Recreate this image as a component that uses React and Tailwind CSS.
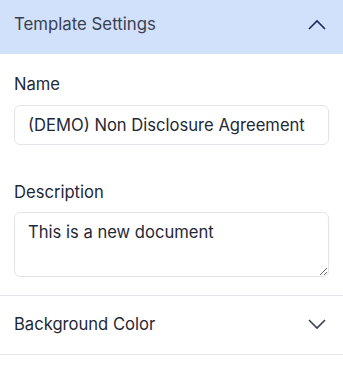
import React, { useState } from 'react';

export default function App() {
  const [name, setName] = useState('(DEMO) Non Disclosure Agreement');
  const [description, setDescription] = useState('This is a new document');

  return (
    <div className="w-[343px] h-[376px] bg-white font-['Inter',sans-serif] text-[#1f2937]">
      {/* Template Settings (open) */}
      <button className="w-full h-[54px] flex items-center justify-between pl-[14px] pr-[16px] pb-[4px] bg-[#d1e0fb] text-[16.8px] text-[#374151]">
        <span>Template Settings</span>
        <svg width="20" height="12" viewBox="0 0 20 12" fill="none" className="text-[#1e2a5a]">
          <path d="M2 10L10 2L18 10" stroke="currentColor" strokeWidth="1.6" />
        </svg>
      </button>

      <div className="px-[14px] pt-[20px] pb-[18px]">
        <label className="block text-[16.6px] leading-[20px] text-[#1f2937] mb-[11px]">Name</label>
        <input
          type="text"
          className="w-full h-[40px] border border-[#e2e4e9] rounded-[6px] px-[13px] text-[16.6px] text-[#1f2937] outline-none"
          value={name}
          onChange={e => setName(e.target.value)}
        />

        <label className="block text-[16.6px] leading-[20px] text-[#1f2937] mt-[37px] mb-[10px]">Description</label>
        <textarea
          className="block w-full h-[65px] border border-[#e2e4e9] rounded-[6px] px-[13px] pt-[8px] text-[16.6px] leading-[22px] text-[#1f2937] outline-none"
          value={description}
          onChange={e => setDescription(e.target.value)}
        />
      </div>

      {/* Background Color (closed) */}
      <div className="border-t border-b border-[#e2e4e9]">
        <button className="w-full h-[58px] flex items-center justify-between pl-[14px] pr-[16px] pb-[2px] text-[16.6px] text-[#1f2937]">
          <span>Background Color</span>
          <svg width="20" height="12" viewBox="0 0 20 12" fill="none" className="text-[#374151]">
            <path d="M2 2L10 10L18 2" stroke="currentColor" strokeWidth="1.6" />
          </svg>
        </button>
      </div>
    </div>
  );
}
